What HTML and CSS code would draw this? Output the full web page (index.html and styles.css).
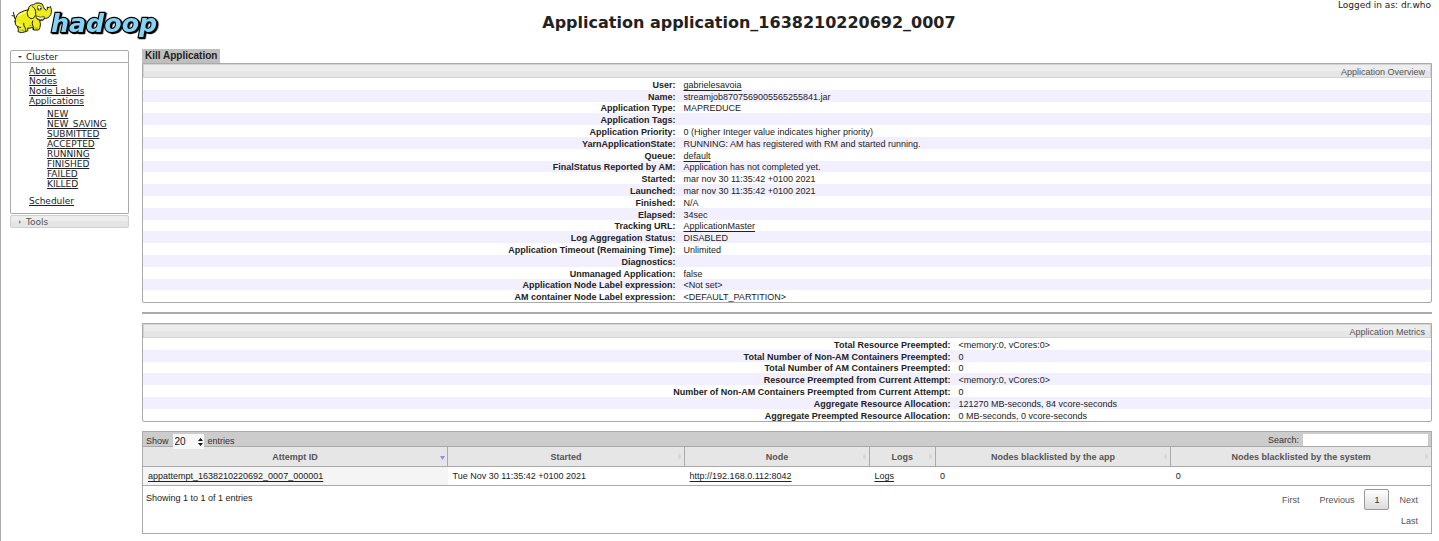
FILE: index.html
```html
<!DOCTYPE html>
<html lang="en">
<head>
<meta charset="utf-8">
<title>Application application_1638210220692_0007</title>
<link rel="stylesheet" href="styles.css">
</head>
<body>
<header class="header">
  <svg class="logo" viewBox="0 0 480 135" role="img" aria-label="Hadoop">
    <g stroke="#1c1c10" stroke-width="3" stroke-linejoin="round" stroke-linecap="round">
      <path fill="none" d="M50 60Q40 56 43 48L36 47M43 48L40 37"/>
      <path fill="#eded1c" d="M45 64Q47 42 64 36Q74 30 84 30Q86 14 101 14Q106 7 117 9Q129 9 130 19Q132 29 139 31Q144 29 142 21L147 23L151 19L154 28Q156 46 144 53Q139 57 134 54Q132 62 124 62L119 61Q123 72 120 82L116 90L100 90L98 82Q90 86 83 84L84 92L77 95L64 98L54 95Q57 87 52 80Q44 75 45 64Z"/>
      <path fill="#f5f532" d="M86 26Q77 38 84 49Q93 61 103 52Q109 45 107 35Q106 24 98 20"/>
      <path fill="none" d="M77 94Q79 86 75 83Q70 77 71 70M100 89Q103 82 98 76Q95 71 98 63M119 61Q111 60 109 53M54 80Q58 83 62 82"/>
      <path fill="#fff" stroke-width="2" d="M109 48Q121 54 133 50L132 57Q121 62 110 55Z"/>
    </g>
    <path d="M55 48Q65 39 79 38M51 66Q54 77 65 77" fill="none" stroke="#ffff8c" stroke-width="4"/>
    <path d="M60 90Q68 93 73 89M104 84Q109 87 114 83M88 76Q92 78 95 76" fill="none" stroke="#b9b910" stroke-width="4"/>
    <path d="M112 21Q113 15 118 17Q123 15 124 24L122 30L113 30Z" fill="#fff" stroke="#222" stroke-width="2"/>
    <circle cx="116" cy="27" r="2" fill="#111"/><circle cx="122" cy="26" r="2" fill="#111"/>
    <text class="wordmark" x="153" y="95">hadoop</text>
  </svg>
  <h1 class="title">Application application_1638210220692_0007</h1>
  <div class="login">Logged in as: dr.who</div>
</header>
<div class="layout">
  <nav class="sidebar">
    <h3 class="nav-head nav-open"><svg class="caret" viewBox="0 0 6 6"><path d="M1 2h4L3 4z" fill="#333"/></svg>Cluster</h3>
    <ul class="nav-list">
      <li><a href="#">About</a></li>
      <li><a href="#">Nodes</a></li>
      <li><a href="#">Node Labels</a></li>
      <li><a href="#">Applications</a>
        <ul class="nav-states">
          <li><a href="#">NEW</a></li>
          <li><a href="#">NEW_SAVING</a></li>
          <li><a href="#">SUBMITTED</a></li>
          <li><a href="#">ACCEPTED</a></li>
          <li><a href="#">RUNNING</a></li>
          <li><a href="#">FINISHED</a></li>
          <li><a href="#">FAILED</a></li>
          <li><a href="#">KILLED</a></li>
        </ul>
      </li>
      <li><a href="#">Scheduler</a></li>
    </ul>
    <h3 class="nav-head nav-closed"><svg class="caret" viewBox="0 0 6 6"><path d="M2 1v4L4 3z" fill="#888"/></svg>Tools</h3>
  </nav>
  <main class="main">
    <button class="kill" type="button">Kill Application</button>
    <section class="panel">
      <h2 class="panel-head">Application Overview</h2>
      <table class="info overview">
        <tbody>
        <tr><th scope="row">User:</th><td><a href="#">gabrielesavoia</a></td></tr>
        <tr><th scope="row">Name:</th><td>streamjob8707569005565255841.jar</td></tr>
        <tr><th scope="row">Application Type:</th><td>MAPREDUCE</td></tr>
        <tr><th scope="row">Application Tags:</th><td></td></tr>
        <tr><th scope="row">Application Priority:</th><td>0 (Higher Integer value indicates higher priority)</td></tr>
        <tr><th scope="row">YarnApplicationState:</th><td>RUNNING: AM has registered with RM and started running.</td></tr>
        <tr><th scope="row">Queue:</th><td><a href="#">default</a></td></tr>
        <tr><th scope="row">FinalStatus Reported by AM:</th><td>Application has not completed yet.</td></tr>
        <tr><th scope="row">Started:</th><td>mar nov 30 11:35:42 +0100 2021</td></tr>
        <tr><th scope="row">Launched:</th><td>mar nov 30 11:35:42 +0100 2021</td></tr>
        <tr><th scope="row">Finished:</th><td>N/A</td></tr>
        <tr><th scope="row">Elapsed:</th><td>34sec</td></tr>
        <tr><th scope="row">Tracking URL:</th><td><a href="#">ApplicationMaster</a></td></tr>
        <tr><th scope="row">Log Aggregation Status:</th><td>DISABLED</td></tr>
        <tr><th scope="row">Application Timeout (Remaining Time):</th><td>Unlimited</td></tr>
        <tr><th scope="row">Diagnostics:</th><td></td></tr>
        <tr><th scope="row">Unmanaged Application:</th><td>false</td></tr>
        <tr><th scope="row">Application Node Label expression:</th><td>&lt;Not set&gt;</td></tr>
        <tr><th scope="row">AM container Node Label expression:</th><td>&lt;DEFAULT_PARTITION&gt;</td></tr>
        </tbody>
      </table>
    </section>
    <hr class="rule">
    <section class="panel">
      <h2 class="panel-head">Application Metrics</h2>
      <table class="info metrics">
        <tbody>
        <tr><th scope="row">Total Resource Preempted:</th><td>&lt;memory:0, vCores:0&gt;</td></tr>
        <tr><th scope="row">Total Number of Non-AM Containers Preempted:</th><td>0</td></tr>
        <tr><th scope="row">Total Number of AM Containers Preempted:</th><td>0</td></tr>
        <tr><th scope="row">Resource Preempted from Current Attempt:</th><td>&lt;memory:0, vCores:0&gt;</td></tr>
        <tr><th scope="row">Number of Non-AM Containers Preempted from Current Attempt:</th><td>0</td></tr>
        <tr><th scope="row">Aggregate Resource Allocation:</th><td>121270 MB-seconds, 84 vcore-seconds</td></tr>
        <tr><th scope="row">Aggregate Preempted Resource Allocation:</th><td>0 MB-seconds, 0 vcore-seconds</td></tr>
        </tbody>
      </table>
    </section>
    <section class="attempts">
      <div class="toolbar">
        <label class="length">Show
          <select class="length-select"><option>20</option><option>40</option></select>
          entries</label>
        <label class="search">Search: <input class="search-input" type="text"></label>
      </div>
      <table class="grid">
        <colgroup><col class="c-id"><col class="c-start"><col class="c-node"><col class="c-logs"><col class="c-app"><col class="c-sys"></colgroup>
        <thead>
          <tr>
            <th scope="col"><div class="sort">Attempt ID<svg class="arrow" viewBox="0 0 5 9"><path d="M0 4h5L2.500 8z" fill="#8f8ff5"/></svg></div></th>
            <th scope="col"><div class="sort">Started<svg class="arrow" viewBox="0 0 5 9"><path d="M1 4l1.500-3L4 4v1L2.500 8 1 5z" fill="#d6d6d6"/></svg></div></th>
            <th scope="col"><div class="sort">Node<svg class="arrow" viewBox="0 0 5 9"><path d="M1 4l1.500-3L4 4v1L2.500 8 1 5z" fill="#d6d6d6"/></svg></div></th>
            <th scope="col"><div class="sort">Logs<svg class="arrow" viewBox="0 0 5 9"><path d="M1 4l1.500-3L4 4v1L2.500 8 1 5z" fill="#d6d6d6"/></svg></div></th>
            <th scope="col"><div class="sort">Nodes blacklisted by the app<svg class="arrow" viewBox="0 0 5 9"><path d="M1 4l1.500-3L4 4v1L2.500 8 1 5z" fill="#d6d6d6"/></svg></div></th>
            <th scope="col"><div class="sort">Nodes blacklisted by the system<svg class="arrow" viewBox="0 0 5 9"><path d="M1 4l1.500-3L4 4v1L2.500 8 1 5z" fill="#d6d6d6"/></svg></div></th>
          </tr>
        </thead>
        <tbody>
          <tr>
            <td class="sorted"><a href="#">appattempt_1638210220692_0007_000001</a></td>
            <td>Tue Nov 30 11:35:42 +0100 2021</td>
            <td><a href="#">http://192.168.0.112:8042</a></td>
            <td><a href="#">Logs</a></td>
            <td>0</td>
            <td>0</td>
          </tr>
        </tbody>
      </table>
      <div class="footer">
        <div class="summary">Showing 1 to 1 of 1 entries</div>
        <div class="pager">
          <button class="page" type="button">First</button>
          <button class="page" type="button">Previous</button>
          <button class="page current" type="button">1</button>
          <button class="page" type="button">Next</button>
          <button class="page" type="button">Last</button>
        </div>
      </div>
    </section>
  </main>
</div>
</body>
</html>
```
FILE: styles.css
```css
* { box-sizing: border-box; }
body {
  margin: 0;
  min-height: 100vh;
  border-left: 1px solid #aaa;
  background: #fff;
  color: #222;
  font: 9px/12px "Liberation Sans", Arial, sans-serif;
}
a {
  color: inherit;
  text-decoration: underline;
  text-decoration-thickness: 1px;
  text-decoration-skip-ink: none;
  text-underline-offset: 2px;
}
button, input, select { font: inherit; color: inherit; margin: 0; }

.header {
  display: flex;
  height: 49px;
  padding-right: 8px;
  font-family: "DejaVu Sans", Verdana, sans-serif;
}
.logo { width: 160px; height: 45px; flex: none; margin-left: -1px; }
.wordmark {
  font: italic bold 76px "DejaVu Sans", sans-serif;
  fill: #83d5f7;
  stroke: #000;
  stroke-width: 7px;
  paint-order: stroke;
  filter: drop-shadow(4px 3px 0 #000);
}
.title {
  flex: 1;
  margin: 0;
  padding-top: 13px;
  font-size: 16px;
  line-height: 20px;
  text-align: center;
}
.login { line-height: 10px; }

.layout { display: flex; align-items: flex-start; padding-right: 7px; }
.sidebar {
  flex: none;
  width: 119px;
  margin: 1px 13px 0 9px;
  font-family: "DejaVu Sans", Verdana, sans-serif;
  line-height: 10px;
}
.sidebar a { text-underline-offset: 1px; }
.nav-head {
  display: flex;
  align-items: center;
  gap: 3px;
  height: 13px;
  margin: 0;
  padding-left: 6px;
  border: 1px solid #aaa;
  font-size: 9px;
  font-weight: normal;
}
.nav-open { border-radius: 2px 2px 0 0; }
.nav-closed {
  margin-top: 1px;
  border-color: #d0d0d0;
  border-radius: 2px;
  background: linear-gradient(#ededed 50%, #e5e5e5 50%);
  color: #555;
}
.caret { width: 6px; height: 6px; }
.nav-list, .nav-states { margin: 0; list-style: none; }
.nav-list {
  padding: 3px 0 7px 18px;
  border: 1px solid #aaa;
  border-top: 0;
  border-radius: 0 0 2px 2px;
}
.nav-states { margin: 3px 0 7px; padding-left: 18px; }

.main { flex: 1; min-width: 0; }
.kill {
  display: block;
  height: 14px;
  padding: 0 3px;
  border: 0;
  background: #bfbfbf;
  font-size: 10px;
  font-weight: bold;
  line-height: 14px;
}
.panel { border: 1px solid #aaa; border-radius: 0 0 2px 2px; }
.panel-head {
  height: 14px;
  margin: 0;
  padding: 1px 5px 0 0;
  border: 1px solid #d3d3d3;
  background: linear-gradient(#ededed 50%, #e6e6e6 50%);
  color: #555;
  font-size: 9px;
  font-weight: normal;
  text-align: right;
  line-height: 12px;
}
.info { width: 100%; border-collapse: collapse; table-layout: fixed; }
.info th, .info td { height: 12px; padding: 0 4px; line-height: 9px; vertical-align: bottom; }
.info th { text-align: right; }
.info tr:nth-child(5n+3) > * { height: 11px; }
.info tr:nth-child(even) { background: #f2f0ff; }
.overview th { width: 41.65%; }
.metrics th { width: 63%; }
.rule { height: 2px; margin: 9px 0; border: 0; background: #aaa; }

.attempts { margin-top: 9px; border: 1px solid #aaa; }
.toolbar {
  display: flex;
  justify-content: space-between;
  height: 14px;
  padding: 2px 3px 0;
  background: #ccc;
  color: #333;
}
.length, .search { display: flex; }
.length { gap: 4px; line-height: 15px; }
.search { gap: 4px; }
.length-select {
  position: relative;
  width: 31px;
  height: 15px;
  padding: 0 2px;
  border: 0;
  border-radius: 0;
  appearance: none;
  background: #f8f8f8 url("data:image/svg+xml,%3Csvg xmlns='http://www.w3.org/2000/svg' width='5' height='8'%3E%3Cpath d='M0 3L2.5 0 5 3zM0 5h5L2.500 8z' fill='%23111'/%3E%3C/svg%3E") no-repeat right 1px center;
  color: #111;
  font-size: 10px;
}
.search-input { width: 125px; height: 12px; padding: 0 2px; border: 0; background: #fff; }
.grid { width: 100%; border-collapse: collapse; table-layout: fixed; }
.grid th {
  height: 20px;
  padding: 0 2px;
  border: solid #aaa;
  border-width: 1px 0 1px 1px;
  background: #e6e6e6;
  color: #555;
}
.grid th:first-child { border-left: 0; }
.sort { display: grid; grid-template-columns: 1fr auto 1fr; align-items: center; }
.sort::before { content: ""; }
.arrow { width: 5px; height: 9px; justify-self: end; }
.grid td { height: 19px; padding: 0 5px; border-bottom: 1px solid #aaa; }
.sorted { background: #f5f5f5; }
.c-id { width: 23.65%; }
.c-start { width: 18.4%; }
.c-node { width: 14.35%; }
.c-logs { width: 5.1%; }
.c-app { width: 18.3%; }
.c-sys { width: 20.2%; }
.footer { display: flex; justify-content: space-between; padding: 3px 3px 2px 2px; }
.summary { padding: 3px 1px; }
.pager { display: flex; flex-wrap: wrap; justify-content: flex-end; width: 180px; }
.page {
  height: 21px;
  padding: 0 9px;
  border: 1px solid transparent;
  border-radius: 2px;
  background: none;
  color: #555;
}
.current { border-color: #999; background: linear-gradient(#fff, #dcdcdc); color: #333; }
```
